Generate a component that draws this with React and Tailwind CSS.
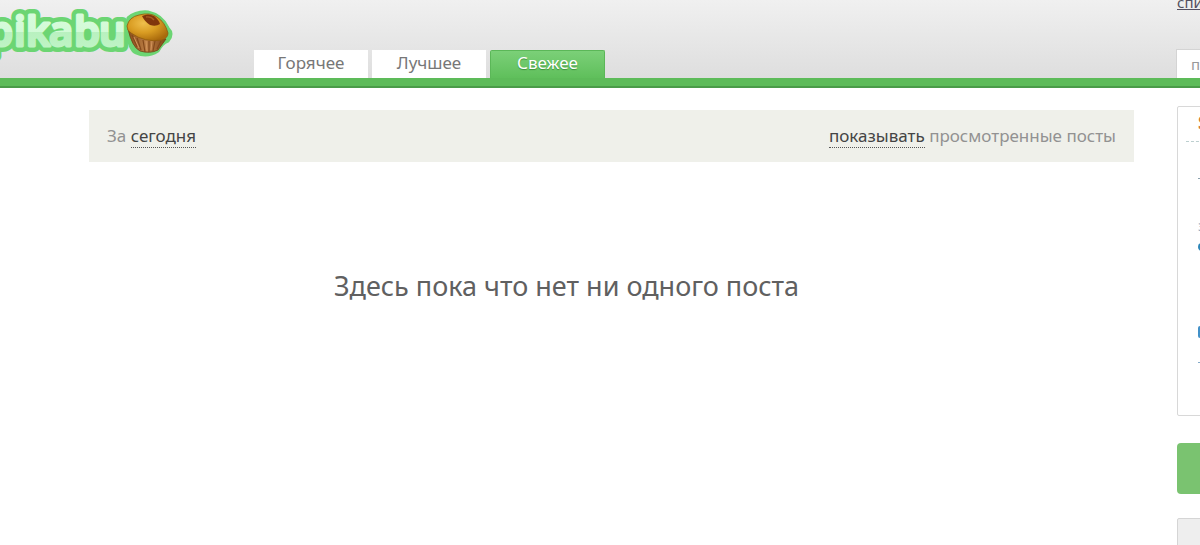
import React from "react";

function Wordmark() {
  return (
    <>
      <text x="-13" y="46">p</text>
      <text x="14" y="46">i</text>
      <text x="26" y="46">k</text>
      <text x="49" y="46">a</text>
      <text x="74" y="46">b</text>
      <text x="99" y="46">u</text>
    </>
  );
}

function Logo() {
  return (
    <svg viewBox="0 0 180 66" className="block h-[66px] w-[180px]" role="img" aria-label="pikabu">
      <defs>
        <linearGradient id="letters" x1="0" y1="8" x2="0" y2="50" gradientUnits="userSpaceOnUse">
          <stop offset="0" stopColor="#d9fcdd" />
          <stop offset="0.56" stopColor="#d2fad7" />
          <stop offset="0.57" stopColor="#b8f1bf" />
          <stop offset="1" stopColor="#c0f4c6" />
        </linearGradient>
        <radialGradient id="cap" cx="0.4" cy="0.35" r="0.7">
          <stop offset="0" stopColor="#efbf4c" />
          <stop offset="0.5" stopColor="#d99c22" />
          <stop offset="1" stopColor="#a96a0c" />
        </radialGradient>
        <linearGradient id="cup" x1="0" y1="0" x2="1" y2="0">
          <stop offset="0" stopColor="#8a4f1c" />
          <stop offset="0.5" stopColor="#bd7f46" />
          <stop offset="1" stopColor="#804716" />
        </linearGradient>
      </defs>
      <g fontFamily="'Open Sans', sans-serif" fontWeight="600" fontSize="42" strokeLinejoin="round" strokeLinecap="round">
        <g fill="#6cd573" stroke="#6cd573" strokeWidth="12">
          <Wordmark />
        </g>
        <path d="M128 18 Q136 11 148 12 Q162 15 168 28 Q174 34 168 41 Q162 43 158 51 Q147 58 136 53 Q129 50 127 30Z" fill="#6cd573" stroke="#6cd573" strokeWidth="3" />
        <g fill="url(#letters)" stroke="url(#letters)" strokeWidth="3" aria-hidden="true">
          <Wordmark />
        </g>
      </g>
      <path d="M128 29 Q140 41 166 39 L158 50 Q150 54 140 51 Q132 47 128 29Z" fill="url(#cup)" stroke="#704011" strokeWidth="0.8" />
      <path d="M132 35l5 12M137 38l4 12M143 40l2 12M149 41l0 11M155 41l-2 10M161 41l-4 8" stroke="#84491b" strokeWidth="1.2" fill="none" />
      <path d="M134 37l5 11M146 41l1 10M152 41l-1 9" stroke="#d2935a" strokeWidth="1" fill="none" />
      <path d="M127 26 Q129 17 139 15 Q150 12 157 17 Q165 22 168 33 Q168 38 162 40 Q145 43 131 33 Q127 31 127 26Z" fill="url(#cap)" stroke="#8f5b0c" strokeWidth="0.8" />
      <path d="M142 16 Q148 13 154 16 Q159 20 160 24 Q156 27 150 25 Q145 22 142 16Z" fill="#80360c" />
      <path d="M146 17 Q151 16 154 20" stroke="#a75a22" strokeWidth="1.3" fill="none" />
    </svg>
  );
}

function Tab({ children }) {
  return (
    <a href="#" className="block h-7 w-[114px] bg-white text-center leading-[26px] text-[#777]">
      {children}
    </a>
  );
}

function Header() {
  return (
    <header className="flex flex-col">
      <div className="flex h-[78px] items-end bg-linear-to-b from-[#f0f0f0] to-[#dedede]">
        <a href="#" className="self-start">
          <Logo />
        </a>
        <nav className="ml-[74px] flex flex-1 items-end gap-1 text-[17px]">
          <Tab>Горячее</Tab>
          <Tab>Лучшее</Tab>
          <a
            href="#"
            aria-current="page"
            className="block h-7 w-[115px] rounded-t-xs border border-b-0 border-[#5bb758] bg-linear-to-b from-[#7bd078] to-[#5fbf5b] text-center leading-6 text-white [text-shadow:0_1px_1px_#3d8f3a]"
          >
            Свежее
          </a>
        </nav>
        <div className="-mr-[257px] flex h-[78px] w-[281px] shrink-0 flex-col justify-between">
          <a href="#" className="-mt-2 ml-px self-start text-[15px] leading-5 text-[#545060] underline">
            список
          </a>
          <input
            type="text"
            aria-label="Поиск"
            placeholder="поиск"
            className="h-[29px] w-full border border-b-0 border-[#d4d4d4] bg-white px-[14px] text-[15px] placeholder:text-[#999]"
          />
        </div>
      </div>
      <div className="h-[10px] border-b-2 border-[#4a9b48] bg-[#5dbb59]" />
    </header>
  );
}

function Sidebar() {
  return (
    <aside className="-mr-[257px] -mt-1 flex w-[280px] shrink-0 flex-col">
      <section className="h-[310px] rounded-xs border border-[#d8d8d8] px-2 pt-1">
        <div className="h-[31px] border-b border-dashed border-[#bccfcf] pl-3">
          <b className="text-[17px] leading-6 text-[#d37a35]">S</b>
        </div>
        <ul className="flex flex-col pl-3 text-[15px]">
          <li className="mt-9 h-px w-2 bg-[#8aa0ac]" />
          <li className="mt-[36px] leading-5 text-[#8aa6c0]">з</li>
          <li className="mt-2 size-2 rounded-full bg-[#2c86b8]" />
          <li className="mt-[75px] h-3 w-3 rounded-xs bg-[#4190c8]" />
          <li className="mt-6 h-px w-2 bg-[#83aac8]" />
        </ul>
      </section>
      <button type="button" aria-label="Добавить пост" className="mt-[27px] h-[51px] rounded-sm bg-[#7ac370]" />
      <section className="mt-6 h-[60px] rounded-xs border border-[#d5d5d5] bg-[#eeeeee]" />
    </aside>
  );
}

export default function App() {
  return (
    <div className="h-screen overflow-hidden bg-white font-['Noto_Sans','Open_Sans',sans-serif]">
      <Header />
      <div className="flex gap-[43px] pl-[89px] pt-[22px]">
        <main className="min-w-0 flex-1">
          <div className="flex h-[52px] items-center justify-between bg-[#eff0ea] px-[18px] text-[17px] leading-6 text-[#929292]">
            <p>
              За{" "}
              <a href="#" className="border-b border-dotted border-[#555] text-[#444]">
                сегодня
              </a>
            </p>
            <p>
              <a href="#" className="border-b border-dotted border-[#555] text-[#444]">
                показывать
              </a>{" "}
              просмотренные посты
            </p>
          </div>
          <h1 className="mr-[90px] mt-[104px] text-center text-[27px] leading-10 text-[#606060]">
            Здесь пока что нет ни одного поста
          </h1>
        </main>
        <Sidebar />
      </div>
    </div>
  );
}
